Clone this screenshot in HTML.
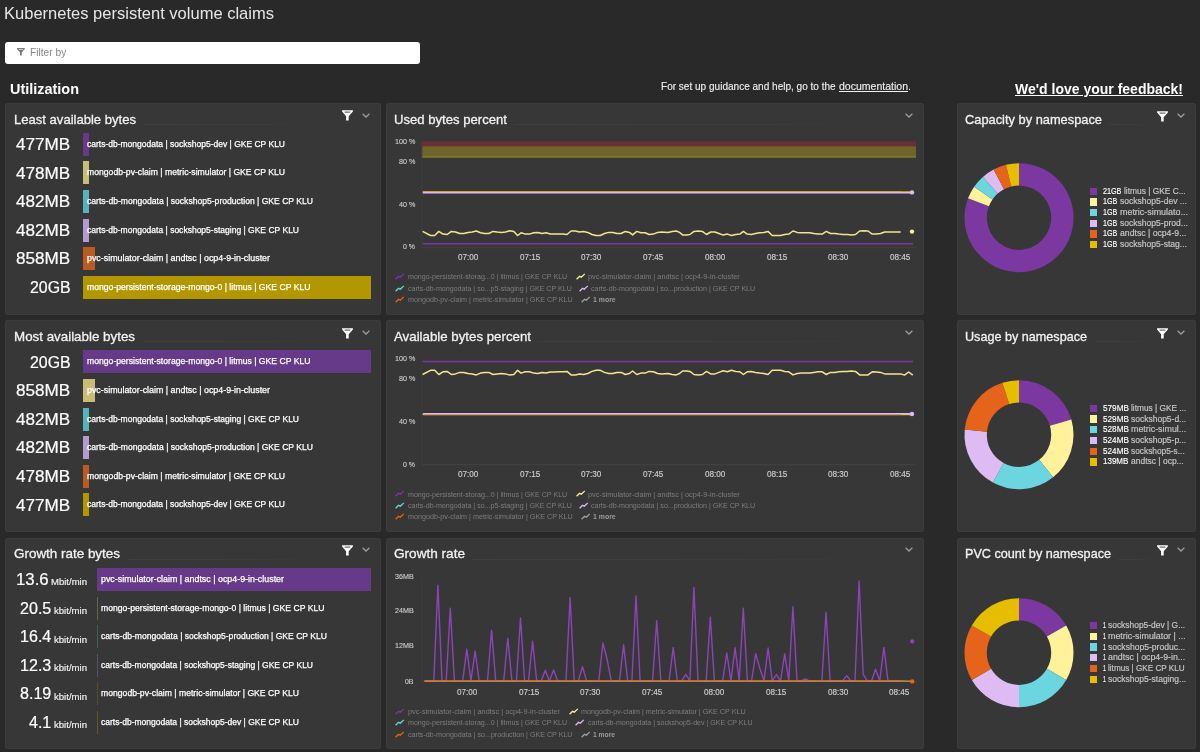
<!DOCTYPE html>
<html lang="en"><head><meta charset="utf-8"><title>Kubernetes persistent volume claims</title>
<style>
html,body{margin:0;padding:0;}
body{width:1200px;height:752px;overflow:hidden;background:#292929;font-family:"Liberation Sans",sans-serif;position:relative;}
#d{position:absolute;left:0;top:0;width:1200px;height:752px;overflow:hidden;filter:blur(0.45px);}
#d div,#d svg,#d span{position:absolute;}
#d span{white-space:pre;line-height:1;transform-origin:0 0;display:block;}
#d svg{overflow:visible;}
</style></head><body><div id="d">
<div style="left:5.3px;top:41.6px;width:415.2px;height:22.7px;background:#fff;border-radius:3px;"></div>
<svg style="left:16.5px;top:48.2px" width="7.8" height="7.6" viewBox="0 0 7.8 7.6" ><path d="M0,0.1 H7.8 V1.0 L4.8,4.3 V7.5 H3.0 V4.3 L0,1.0 Z" fill="#787878"/><path d="M1.9,1.4 H5.9" stroke="#fff" stroke-width="0.7"/></svg>
<div style="left:5px;top:103px;width:375.8px;height:211.6px;background:#373737;border-radius:3px;box-shadow:inset 0 0 0 1px #3b3c3b;"></div>
<div style="left:5px;top:320.2px;width:375.8px;height:211.6px;background:#373737;border-radius:3px;box-shadow:inset 0 0 0 1px #3b3c3b;"></div>
<div style="left:5px;top:537.5px;width:375.8px;height:211.6px;background:#373737;border-radius:3px;box-shadow:inset 0 0 0 1px #3b3c3b;"></div>
<div style="left:385.8px;top:103px;width:538.2px;height:211.6px;background:#373737;border-radius:3px;box-shadow:inset 0 0 0 1px #3b3c3b;"></div>
<div style="left:385.8px;top:320.2px;width:538.2px;height:211.6px;background:#373737;border-radius:3px;box-shadow:inset 0 0 0 1px #3b3c3b;"></div>
<div style="left:385.8px;top:537.5px;width:538.2px;height:211.6px;background:#373737;border-radius:3px;box-shadow:inset 0 0 0 1px #3b3c3b;"></div>
<div style="left:956.9px;top:103px;width:238.8px;height:211.6px;background:#373737;border-radius:3px;box-shadow:inset 0 0 0 1px #3b3c3b;"></div>
<div style="left:956.9px;top:320.2px;width:238.8px;height:211.6px;background:#373737;border-radius:3px;box-shadow:inset 0 0 0 1px #3b3c3b;"></div>
<div style="left:956.9px;top:537.5px;width:238.8px;height:211.6px;background:#373737;border-radius:3px;box-shadow:inset 0 0 0 1px #3b3c3b;"></div>
<div style="left:143px;top:124px;width:177px;height:1px;background:linear-gradient(90deg,#3e3e3e 0%,#3d3d3d 60%,#373737 100%);"></div>
<svg style="left:341.6px;top:110.4px" width="11" height="10.5" viewBox="0 0 11 10.5" ><path d="M0.1,0.3 H10.9 V1.6 L6.7,6.2 V10.4 H4.1 V6.2 L0.1,1.6 Z" fill="#fff"/><path d="M2.6,2.1 H8.4" stroke="#373737" stroke-width="0.9" fill="none"/></svg>
<svg style="left:361.6px;top:112.8px" width="8" height="5" viewBox="0 0 8 5" ><path d="M0.6,0.7 L4,4 L7.4,0.7" stroke="#9c9c9c" stroke-width="1.3" fill="none"/></svg>
<div style="left:82.8px;top:132.8px;width:6.7px;height:23px;background:#673a89;"></div>
<div style="left:82.8px;top:161.4px;width:6.7px;height:23px;background:#c8bc76;"></div>
<div style="left:82.8px;top:190px;width:6.7px;height:23px;background:#55b3b9;"></div>
<div style="left:82.8px;top:218.6px;width:6.7px;height:23px;background:#b39bcf;"></div>
<div style="left:82.8px;top:247.2px;width:12.2px;height:23px;background:#b95b23;"></div>
<div style="left:82.8px;top:275.8px;width:288.2px;height:23px;background:#b39700;"></div>
<div style="left:142px;top:341.2px;width:178px;height:1px;background:linear-gradient(90deg,#3e3e3e 0%,#3d3d3d 60%,#373737 100%);"></div>
<svg style="left:341.6px;top:327.6px" width="11" height="10.5" viewBox="0 0 11 10.5" ><path d="M0.1,0.3 H10.9 V1.6 L6.7,6.2 V10.4 H4.1 V6.2 L0.1,1.6 Z" fill="#fff"/><path d="M2.6,2.1 H8.4" stroke="#373737" stroke-width="0.9" fill="none"/></svg>
<svg style="left:361.6px;top:330px" width="8" height="5" viewBox="0 0 8 5" ><path d="M0.6,0.7 L4,4 L7.4,0.7" stroke="#9c9c9c" stroke-width="1.3" fill="none"/></svg>
<div style="left:82.8px;top:350.4px;width:288.2px;height:23px;background:#673a89;"></div>
<div style="left:82.8px;top:379px;width:12.2px;height:23px;background:#c8bc76;"></div>
<div style="left:82.8px;top:407.6px;width:6.7px;height:23px;background:#55b3b9;"></div>
<div style="left:82.8px;top:436.2px;width:6.7px;height:23px;background:#b39bcf;"></div>
<div style="left:82.8px;top:464.8px;width:6.7px;height:23px;background:#b95b23;"></div>
<div style="left:82.8px;top:493.4px;width:6.7px;height:23px;background:#b39700;"></div>
<div style="left:127px;top:558.5px;width:193px;height:1px;background:linear-gradient(90deg,#3e3e3e 0%,#3d3d3d 60%,#373737 100%);"></div>
<svg style="left:341.6px;top:544.9px" width="11" height="10.5" viewBox="0 0 11 10.5" ><path d="M0.1,0.3 H10.9 V1.6 L6.7,6.2 V10.4 H4.1 V6.2 L0.1,1.6 Z" fill="#fff"/><path d="M2.6,2.1 H8.4" stroke="#373737" stroke-width="0.9" fill="none"/></svg>
<svg style="left:361.6px;top:547.3px" width="8" height="5" viewBox="0 0 8 5" ><path d="M0.6,0.7 L4,4 L7.4,0.7" stroke="#9c9c9c" stroke-width="1.3" fill="none"/></svg>
<div style="left:97px;top:567.9px;width:274px;height:23px;background:#673a89;"></div>
<div style="left:97px;top:596.5px;width:1px;height:23px;background:#6b6440;"></div>
<div style="left:97px;top:625.1px;width:1px;height:23px;background:#3f5f61;"></div>
<div style="left:97px;top:653.7px;width:1px;height:23px;background:#5b5166;"></div>
<div style="left:97px;top:682.3px;width:1px;height:23px;background:#664330;"></div>
<div style="left:97px;top:710.9px;width:1px;height:23px;background:#615624;"></div>
<div style="left:514px;top:124px;width:371px;height:1px;background:linear-gradient(90deg,#3e3e3e 0%,#3d3d3d 60%,#373737 100%);"></div>
<svg style="left:905px;top:112.9px" width="8" height="5" viewBox="0 0 8 5" ><path d="M0.6,0.7 L4,4 L7.4,0.7" stroke="#9c9c9c" stroke-width="1.3" fill="none"/></svg>
<svg style="left:0px;top:103px" width="1200" height="212" viewBox="0 0 1200 212" ><rect x="421.8" y="38.4" width="494.2" height="5.3" fill="#692f37"/><rect x="421.8" y="43.7" width="494.2" height="10.6" fill="#6f652c"/><rect x="421.8" y="53.4" width="494.2" height="1.2" fill="#8c7f28"/><rect x="421.8" y="43.3" width="494.2" height="0.8" fill="#84502f"/><rect x="421.8" y="144.2" width="494.2" height="1" fill="#444"/><rect x="421.3" y="38.4" width="1" height="105.8" fill="#3e3e3e"/><path d="M422.8,140.8 L913.0,140.8" stroke="#7c38a1" stroke-width="1.4" fill="none" stroke-linejoin="round" /><path d="M422.8,88.9 L912.0,88.9" stroke="#e6be00" stroke-width="1.3" fill="none" stroke-linejoin="round" /><path d="M422.8,88.9 L901.0,88.9" stroke="#d9a04a" stroke-width="1.3" fill="none" stroke-linejoin="round" /><path d="M422.8,89.7 L912.0,89.7" stroke="#debbf3" stroke-width="1.4" fill="none" stroke-linejoin="round" /><circle cx="912" cy="89.4" r="2.2" fill="#debbf3"/><path d="M422.6,128.4 L430.5,132.5 L434.7,132.5 L438.8,128.4 L443.0,131.1 L447.2,131.5 L451.3,128.4 L455.5,129.0 L459.7,130.5 L463.8,130.5 L468.0,129.4 L472.2,129.0 L476.3,128.0 L480.5,129.8 L484.7,130.5 L488.8,130.5 L493.0,128.4 L497.2,129.0 L501.3,129.4 L505.5,129.0 L509.7,127.8 L513.8,128.4 L517.6,132.5 L521.1,129.8 L525.3,131.1 L529.5,131.1 L533.6,129.8 L537.8,129.4 L542.0,130.5 L546.1,129.8 L550.3,130.9 L554.5,130.9 L558.6,131.1 L562.8,131.1 L567.0,131.5 L571.1,128.0 L575.3,128.0 L579.5,129.0 L583.6,128.4 L587.8,129.4 L592.0,131.5 L596.1,132.5 L600.3,132.5 L604.5,130.5 L608.6,129.4 L612.8,129.4 L617.0,130.5 L621.1,130.5 L625.3,128.4 L629.5,129.4 L632.6,131.9 L636.8,128.4 L640.9,129.8 L645.1,129.8 L649.2,131.5 L653.4,131.1 L657.6,129.4 L661.8,129.0 L668.0,129.4 L672.2,128.4 L676.3,128.0 L679.5,129.4 L682.6,131.9 L686.8,131.9 L689.9,131.5 L694.0,128.4 L698.2,128.0 L702.4,128.4 L706.5,131.5 L710.7,129.0 L714.9,129.0 L719.0,130.5 L723.2,132.1 L727.4,131.1 L731.5,132.5 L735.7,131.5 L739.9,131.1 L743.4,128.4 L747.2,131.1 L751.3,131.5 L755.5,130.5 L759.7,129.8 L763.8,129.4 L768.0,128.4 L772.2,132.5 L776.3,132.5 L780.5,132.5 L784.7,131.5 L788.8,131.1 L793.0,128.0 L797.2,129.4 L801.3,129.8 L805.5,129.8 L809.7,129.8 L813.8,130.5 L818.0,131.1 L822.2,131.1 L826.3,128.4 L830.5,130.5 L834.7,130.5 L838.8,131.1 L843.0,131.5 L847.2,131.5 L851.3,131.9 L855.5,131.5 L859.7,128.0 L863.8,127.8 L868.0,128.0 L872.2,131.1 L876.3,130.9 L880.5,130.5 L884.7,129.0 L888.8,129.0 L893.0,129.0 L897.2,129.0 L900.7,129.0" stroke="#f3e68e" stroke-width="1.5" fill="none" stroke-linejoin="round" /><circle cx="912" cy="128.6" r="2.2" fill="#fff29a"/></svg>
<svg style="left:394.5px;top:273.2px" width="9.5" height="7" viewBox="0 0 9.5 7" ><path d="M0.6,6.2 L3.6,3.2 L5.2,4.3 L8.8,0.9" stroke="#7c38a1" stroke-width="1.3" fill="none" stroke-linejoin="round"/></svg>
<svg style="left:575.5px;top:273.2px" width="9.5" height="7" viewBox="0 0 9.5 7" ><path d="M0.6,6.2 L3.6,3.2 L5.2,4.3 L8.8,0.9" stroke="#fff29a" stroke-width="1.3" fill="none" stroke-linejoin="round"/></svg>
<svg style="left:394.5px;top:284.6px" width="9.5" height="7" viewBox="0 0 9.5 7" ><path d="M0.6,6.2 L3.6,3.2 L5.2,4.3 L8.8,0.9" stroke="#6bd5e0" stroke-width="1.3" fill="none" stroke-linejoin="round"/></svg>
<svg style="left:579.3px;top:284.6px" width="9.5" height="7" viewBox="0 0 9.5 7" ><path d="M0.6,6.2 L3.6,3.2 L5.2,4.3 L8.8,0.9" stroke="#debbf3" stroke-width="1.3" fill="none" stroke-linejoin="round"/></svg>
<svg style="left:394.5px;top:296px" width="9.5" height="7" viewBox="0 0 9.5 7" ><path d="M0.6,6.2 L3.6,3.2 L5.2,4.3 L8.8,0.9" stroke="#e6631c" stroke-width="1.3" fill="none" stroke-linejoin="round"/></svg>
<svg style="left:580.7px;top:296px" width="9.5" height="7" viewBox="0 0 9.5 7" ><path d="M0.6,6.2 L3.6,3.2 L5.2,4.3 L8.8,0.9" stroke="#a0a0a0" stroke-width="1.3" fill="none" stroke-linejoin="round"/></svg>
<div style="left:538px;top:341.2px;width:347px;height:1px;background:linear-gradient(90deg,#3e3e3e 0%,#3d3d3d 60%,#373737 100%);"></div>
<svg style="left:905px;top:330.1px" width="8" height="5" viewBox="0 0 8 5" ><path d="M0.6,0.7 L4,4 L7.4,0.7" stroke="#9c9c9c" stroke-width="1.3" fill="none"/></svg>
<svg style="left:0px;top:320.2px" width="1200" height="212" viewBox="0 0 1200 212" ><rect x="421.8" y="144.2" width="494.2" height="1" fill="#444"/><rect x="421.3" y="38.4" width="1" height="105.8" fill="#3e3e3e"/><path d="M422.8,41.4 L913.0,41.4" stroke="#7c38a1" stroke-width="1.5" fill="none" stroke-linejoin="round" /><path d="M422.6,54.5 L430.5,50.3 L434.7,50.3 L438.8,54.5 L443.0,51.8 L447.2,51.4 L451.3,54.5 L455.5,53.9 L459.7,52.4 L463.8,52.4 L468.0,53.5 L472.2,53.9 L476.3,54.9 L480.5,53.1 L484.7,52.4 L488.8,52.4 L493.0,54.5 L497.2,53.9 L501.3,53.5 L505.5,53.9 L509.7,55.1 L513.8,54.5 L517.6,50.3 L521.1,53.1 L525.3,51.8 L529.5,51.8 L533.6,53.1 L537.8,53.5 L542.0,52.4 L546.1,53.1 L550.3,52.0 L554.5,52.0 L558.6,51.8 L562.8,51.8 L567.0,51.4 L571.1,54.9 L575.3,54.9 L579.5,53.9 L583.6,54.5 L587.8,53.5 L592.0,51.4 L596.1,50.3 L600.3,50.3 L604.5,52.4 L608.6,53.5 L612.8,53.5 L617.0,52.4 L621.1,52.4 L625.3,54.5 L629.5,53.5 L632.6,51.0 L636.8,54.5 L640.9,53.1 L645.1,53.1 L649.2,51.4 L653.4,51.8 L657.6,53.5 L661.8,53.9 L668.0,53.5 L672.2,54.5 L676.3,54.9 L679.5,53.5 L682.6,51.0 L686.8,51.0 L689.9,51.4 L694.0,54.5 L698.2,54.9 L702.4,54.5 L706.5,51.4 L710.7,53.9 L714.9,53.9 L719.0,52.4 L723.2,50.8 L727.4,51.8 L731.5,50.3 L735.7,51.4 L739.9,51.8 L743.4,54.5 L747.2,51.8 L751.3,51.4 L755.5,52.4 L759.7,53.1 L763.8,53.5 L768.0,54.5 L772.2,50.3 L776.3,50.3 L780.5,50.3 L784.7,51.4 L788.8,51.8 L793.0,54.9 L797.2,53.5 L801.3,53.1 L805.5,53.1 L809.7,53.1 L813.8,52.4 L818.0,51.8 L822.2,51.8 L826.3,54.5 L830.5,52.4 L834.7,52.4 L838.8,51.8 L843.0,51.4 L847.2,51.4 L851.3,51.0 L855.5,51.4 L859.7,54.9 L863.8,55.1 L868.0,54.9 L872.2,51.8 L876.3,52.0 L880.5,52.4 L884.7,53.9 L888.8,53.9 L893.0,53.9 L897.2,53.9 L900.7,53.9 L904.5,55.1 L908.6,52.0 L912.8,55.1" stroke="#f3e68e" stroke-width="1.5" fill="none" stroke-linejoin="round" /><path d="M422.8,94.5 L912.0,94.5" stroke="#e6be00" stroke-width="1.4" fill="none" stroke-linejoin="round" /><path d="M422.8,94.5 L901.0,94.5" stroke="#e6631c" stroke-width="1.2" fill="none" stroke-linejoin="round" /><path d="M422.8,93.7 L912.0,93.7" stroke="#debbf3" stroke-width="1.4" fill="none" stroke-linejoin="round" /><circle cx="912" cy="94" r="2.2" fill="#debbf3"/></svg>
<svg style="left:394.5px;top:490.4px" width="9.5" height="7" viewBox="0 0 9.5 7" ><path d="M0.6,6.2 L3.6,3.2 L5.2,4.3 L8.8,0.9" stroke="#7c38a1" stroke-width="1.3" fill="none" stroke-linejoin="round"/></svg>
<svg style="left:575.5px;top:490.4px" width="9.5" height="7" viewBox="0 0 9.5 7" ><path d="M0.6,6.2 L3.6,3.2 L5.2,4.3 L8.8,0.9" stroke="#fff29a" stroke-width="1.3" fill="none" stroke-linejoin="round"/></svg>
<svg style="left:394.5px;top:501.8px" width="9.5" height="7" viewBox="0 0 9.5 7" ><path d="M0.6,6.2 L3.6,3.2 L5.2,4.3 L8.8,0.9" stroke="#6bd5e0" stroke-width="1.3" fill="none" stroke-linejoin="round"/></svg>
<svg style="left:579.3px;top:501.8px" width="9.5" height="7" viewBox="0 0 9.5 7" ><path d="M0.6,6.2 L3.6,3.2 L5.2,4.3 L8.8,0.9" stroke="#debbf3" stroke-width="1.3" fill="none" stroke-linejoin="round"/></svg>
<svg style="left:394.5px;top:513.2px" width="9.5" height="7" viewBox="0 0 9.5 7" ><path d="M0.6,6.2 L3.6,3.2 L5.2,4.3 L8.8,0.9" stroke="#e6631c" stroke-width="1.3" fill="none" stroke-linejoin="round"/></svg>
<svg style="left:580.7px;top:513.2px" width="9.5" height="7" viewBox="0 0 9.5 7" ><path d="M0.6,6.2 L3.6,3.2 L5.2,4.3 L8.8,0.9" stroke="#a0a0a0" stroke-width="1.3" fill="none" stroke-linejoin="round"/></svg>
<div style="left:472px;top:558.5px;width:413px;height:1px;background:linear-gradient(90deg,#3e3e3e 0%,#3d3d3d 60%,#373737 100%);"></div>
<svg style="left:905px;top:547.4px" width="8" height="5" viewBox="0 0 8 5" ><path d="M0.6,0.7 L4,4 L7.4,0.7" stroke="#9c9c9c" stroke-width="1.3" fill="none"/></svg>
<svg style="left:0px;top:537.5px" width="1200" height="212" viewBox="0 0 1200 212" ><rect x="421.8" y="142.9" width="494.2" height="1" fill="#444"/><rect x="421.3" y="38.4" width="1" height="104.5" fill="#3e3e3e"/><path d="M424.5,142.9 L433.8,142.9 L437.9,47.1 L442.0,142.9 L446.2,142.9 L450.3,70.1 L454.4,142.9 L462.7,142.9 L466.8,111.2 L470.9,142.9 L475.1,113.0 L479.2,142.9 L487.5,142.9 L491.6,92.3 L495.7,142.9 L503.7,142.9 L507.8,100.3 L511.9,142.9 L516.4,142.9 L520.5,79.9 L524.6,142.9 L528.5,142.9 L532.6,103.2 L536.7,142.9 L541.2,142.9 L545.3,132.2 L549.4,142.9 L553.6,131.9 L557.7,142.9 L566.0,142.9 L570.1,59.5 L574.2,142.9 L578.4,142.9 L582.5,128.6 L586.6,142.9 L598.8,142.9 L602.9,105.0 L607.1,121.2 L611.2,142.9 L619.5,142.9 L623.6,106.8 L627.7,142.9 L631.9,142.9 L636.0,58.0 L640.1,142.9 L652.6,142.9 L656.7,82.8 L660.8,142.9 L669.1,142.9 L673.2,109.4 L677.3,142.9 L681.7,142.9 L685.8,136.3 L689.9,142.9 L693.9,49.5 L698.0,142.9 L706.2,142.9 L710.3,79.3 L714.4,142.9 L722.7,142.9 L726.8,115.0 L730.9,142.9 L735.1,109.7 L739.2,142.9 L743.3,70.1 L747.4,142.9 L751.6,142.9 L755.7,115.6 L759.9,130.5 L764.0,142.9 L768.1,110.0 L772.2,142.9 L776.4,136.6 L780.5,142.9 L784.7,115.9 L788.8,142.9 L792.9,68.7 L797.0,142.9 L801.2,142.9 L805.3,141.0 L809.4,142.9 L821.9,142.9 L826.0,74.3 L830.1,142.9 L842.6,142.9 L846.7,137.8 L850.8,142.9 L855.0,142.9 L859.1,43.0 L863.2,136.3 L867.3,142.9 L871.5,142.9 L875.6,131.3 L879.7,142.9 L883.9,109.4 L888.0,142.9 L901.0,142.9" stroke="#8d44b8" stroke-width="1.4" fill="none" stroke-linejoin="round" /><path d="M424.5,143.2 L912.0,143.2" stroke="#cfa548" stroke-width="1.2" fill="none" stroke-linejoin="round" /><path d="M424.5,142.8 L905.0,142.8" stroke="#d06a2b" stroke-width="1.0" fill="none" stroke-linejoin="round" /><circle cx="912.2" cy="103.4" r="2.1" fill="#8d44b8"/><circle cx="912.2" cy="143.4" r="2.2" fill="#e6631c"/></svg>
<svg style="left:394.5px;top:707.7px" width="9.5" height="7" viewBox="0 0 9.5 7" ><path d="M0.6,6.2 L3.6,3.2 L5.2,4.3 L8.8,0.9" stroke="#7c38a1" stroke-width="1.3" fill="none" stroke-linejoin="round"/></svg>
<svg style="left:568.5px;top:707.7px" width="9.5" height="7" viewBox="0 0 9.5 7" ><path d="M0.6,6.2 L3.6,3.2 L5.2,4.3 L8.8,0.9" stroke="#fff29a" stroke-width="1.3" fill="none" stroke-linejoin="round"/></svg>
<svg style="left:394.5px;top:719.1px" width="9.5" height="7" viewBox="0 0 9.5 7" ><path d="M0.6,6.2 L3.6,3.2 L5.2,4.3 L8.8,0.9" stroke="#6bd5e0" stroke-width="1.3" fill="none" stroke-linejoin="round"/></svg>
<svg style="left:575.3px;top:719.1px" width="9.5" height="7" viewBox="0 0 9.5 7" ><path d="M0.6,6.2 L3.6,3.2 L5.2,4.3 L8.8,0.9" stroke="#debbf3" stroke-width="1.3" fill="none" stroke-linejoin="round"/></svg>
<svg style="left:394.5px;top:730.5px" width="9.5" height="7" viewBox="0 0 9.5 7" ><path d="M0.6,6.2 L3.6,3.2 L5.2,4.3 L8.8,0.9" stroke="#e6631c" stroke-width="1.3" fill="none" stroke-linejoin="round"/></svg>
<svg style="left:580.5px;top:730.5px" width="9.5" height="7" viewBox="0 0 9.5 7" ><path d="M0.6,6.2 L3.6,3.2 L5.2,4.3 L8.8,0.9" stroke="#a0a0a0" stroke-width="1.3" fill="none" stroke-linejoin="round"/></svg>
<div style="left:1109px;top:124px;width:42px;height:1px;background:linear-gradient(90deg,#3e3e3e 0%,#3d3d3d 60%,#373737 100%);"></div>
<svg style="left:1156.6px;top:110.6px" width="11" height="10.5" viewBox="0 0 11 10.5" ><path d="M0.1,0.3 H10.9 V1.6 L6.7,6.2 V10.4 H4.1 V6.2 L0.1,1.6 Z" fill="#fff"/><path d="M2.6,2.1 H8.4" stroke="#373737" stroke-width="0.9" fill="none"/></svg>
<svg style="left:1176.5px;top:112.8px" width="8" height="5" viewBox="0 0 8 5" ><path d="M0.6,0.7 L4,4 L7.4,0.7" stroke="#9c9c9c" stroke-width="1.3" fill="none"/></svg>
<svg style="left:0px;top:103px" width="1200" height="212" viewBox="0 0 1200 212" ><path d="M1019.00,60.20 A54.5,54.5 0 1 1 968.04,95.37 L988.89,103.28 A32.2,32.2 0 1 0 1019.00,82.50 Z" fill="#7c38a1"/><path d="M968.04,95.37 A54.5,54.5 0 0 1 974.15,83.74 L992.50,96.41 A32.2,32.2 0 0 0 988.89,103.28 Z" fill="#fff29a"/><path d="M974.15,83.74 A54.5,54.5 0 0 1 982.86,73.91 L997.65,90.60 A32.2,32.2 0 0 0 992.50,96.41 Z" fill="#6bd5e0"/><path d="M982.86,73.91 A54.5,54.5 0 0 1 993.67,66.44 L1004.04,86.19 A32.2,32.2 0 0 0 997.65,90.60 Z" fill="#debbf3"/><path d="M993.67,66.44 A54.5,54.5 0 0 1 1005.96,61.78 L1011.29,83.44 A32.2,32.2 0 0 0 1004.04,86.19 Z" fill="#e6631c"/><path d="M1005.96,61.78 A54.5,54.5 0 0 1 1019.00,60.20 L1019.00,82.50 A32.2,32.2 0 0 0 1011.29,83.44 Z" fill="#e6be00"/></svg>
<div style="left:1089.6px;top:187.5px;width:7.4px;height:7.4px;background:#7c38a1;"></div>
<div style="left:1089.6px;top:198.2px;width:7.4px;height:7.4px;background:#fff29a;"></div>
<div style="left:1089.6px;top:208.9px;width:7.4px;height:7.4px;background:#6bd5e0;"></div>
<div style="left:1089.6px;top:219.6px;width:7.4px;height:7.4px;background:#debbf3;"></div>
<div style="left:1089.6px;top:230.3px;width:7.4px;height:7.4px;background:#e6631c;"></div>
<div style="left:1089.6px;top:241px;width:7.4px;height:7.4px;background:#e6be00;"></div>
<div style="left:1094px;top:341.2px;width:57px;height:1px;background:linear-gradient(90deg,#3e3e3e 0%,#3d3d3d 60%,#373737 100%);"></div>
<svg style="left:1156.6px;top:327.8px" width="11" height="10.5" viewBox="0 0 11 10.5" ><path d="M0.1,0.3 H10.9 V1.6 L6.7,6.2 V10.4 H4.1 V6.2 L0.1,1.6 Z" fill="#fff"/><path d="M2.6,2.1 H8.4" stroke="#373737" stroke-width="0.9" fill="none"/></svg>
<svg style="left:1176.5px;top:330px" width="8" height="5" viewBox="0 0 8 5" ><path d="M0.6,0.7 L4,4 L7.4,0.7" stroke="#9c9c9c" stroke-width="1.3" fill="none"/></svg>
<svg style="left:0px;top:320.2px" width="1200" height="212" viewBox="0 0 1200 212" ><path d="M1019.00,60.20 A54.5,54.5 0 0 1 1071.35,99.53 L1049.93,105.74 A32.2,32.2 0 0 0 1019.00,82.50 Z" fill="#7c38a1"/><path d="M1071.35,99.53 A54.5,54.5 0 0 1 1053.08,157.23 L1039.13,139.83 A32.2,32.2 0 0 0 1049.93,105.74 Z" fill="#fff29a"/><path d="M1053.08,157.23 A54.5,54.5 0 0 1 992.89,162.54 L1003.57,142.96 A32.2,32.2 0 0 0 1039.13,139.83 Z" fill="#6bd5e0"/><path d="M992.89,162.54 A54.5,54.5 0 0 1 964.75,109.52 L986.95,111.64 A32.2,32.2 0 0 0 1003.57,142.96 Z" fill="#debbf3"/><path d="M964.75,109.52 A54.5,54.5 0 0 1 1002.41,62.79 L1009.20,84.03 A32.2,32.2 0 0 0 986.95,111.64 Z" fill="#e6631c"/><path d="M1002.41,62.79 A54.5,54.5 0 0 1 1019.00,60.20 L1019.00,82.50 A32.2,32.2 0 0 0 1009.20,84.03 Z" fill="#e6be00"/></svg>
<div style="left:1089.6px;top:404.7px;width:7.4px;height:7.4px;background:#7c38a1;"></div>
<div style="left:1089.6px;top:415.4px;width:7.4px;height:7.4px;background:#fff29a;"></div>
<div style="left:1089.6px;top:426.1px;width:7.4px;height:7.4px;background:#6bd5e0;"></div>
<div style="left:1089.6px;top:436.8px;width:7.4px;height:7.4px;background:#debbf3;"></div>
<div style="left:1089.6px;top:447.5px;width:7.4px;height:7.4px;background:#e6631c;"></div>
<div style="left:1089.6px;top:458.2px;width:7.4px;height:7.4px;background:#e6be00;"></div>
<div style="left:1118px;top:558.5px;width:35px;height:1px;background:linear-gradient(90deg,#3e3e3e 0%,#3d3d3d 60%,#373737 100%);"></div>
<svg style="left:1156.6px;top:545.1px" width="11" height="10.5" viewBox="0 0 11 10.5" ><path d="M0.1,0.3 H10.9 V1.6 L6.7,6.2 V10.4 H4.1 V6.2 L0.1,1.6 Z" fill="#fff"/><path d="M2.6,2.1 H8.4" stroke="#373737" stroke-width="0.9" fill="none"/></svg>
<svg style="left:1176.5px;top:547.3px" width="8" height="5" viewBox="0 0 8 5" ><path d="M0.6,0.7 L4,4 L7.4,0.7" stroke="#9c9c9c" stroke-width="1.3" fill="none"/></svg>
<svg style="left:0px;top:537.5px" width="1200" height="212" viewBox="0 0 1200 212" ><path d="M1019.00,60.20 A54.5,54.5 0 0 1 1066.20,87.45 L1046.89,98.60 A32.2,32.2 0 0 0 1019.00,82.50 Z" fill="#7c38a1"/><path d="M1066.20,87.45 A54.5,54.5 0 0 1 1066.20,141.95 L1046.89,130.80 A32.2,32.2 0 0 0 1046.89,98.60 Z" fill="#fff29a"/><path d="M1066.20,141.95 A54.5,54.5 0 0 1 1019.00,169.20 L1019.00,146.90 A32.2,32.2 0 0 0 1046.89,130.80 Z" fill="#6bd5e0"/><path d="M1019.00,169.20 A54.5,54.5 0 0 1 971.80,141.95 L991.11,130.80 A32.2,32.2 0 0 0 1019.00,146.90 Z" fill="#debbf3"/><path d="M971.80,141.95 A54.5,54.5 0 0 1 971.80,87.45 L991.11,98.60 A32.2,32.2 0 0 0 991.11,130.80 Z" fill="#e6631c"/><path d="M971.80,87.45 A54.5,54.5 0 0 1 1019.00,60.20 L1019.00,82.50 A32.2,32.2 0 0 0 991.11,98.60 Z" fill="#e6be00"/></svg>
<div style="left:1089.6px;top:622px;width:7.4px;height:7.4px;background:#7c38a1;"></div>
<div style="left:1089.6px;top:632.7px;width:7.4px;height:7.4px;background:#fff29a;"></div>
<div style="left:1089.6px;top:643.4px;width:7.4px;height:7.4px;background:#6bd5e0;"></div>
<div style="left:1089.6px;top:654.1px;width:7.4px;height:7.4px;background:#debbf3;"></div>
<div style="left:1089.6px;top:664.8px;width:7.4px;height:7.4px;background:#e6631c;"></div>
<div style="left:1089.6px;top:675.5px;width:7.4px;height:7.4px;background:#e6be00;"></div>
<span style="left:4px;top:4.61px;font-size:17px;color:#e6e6e6;transform:scaleX(0.9719);">Kubernetes persistent volume claims</span>
<span style="left:29.5px;top:47.11px;font-size:10.5px;color:#878787;transform:scaleX(0.9721);">Filter by</span>
<span style="left:10px;top:81.30px;font-size:15px;color:#fff;font-weight:700;transform:scaleX(0.9627);">Utilization</span>
<span style="left:661px;top:80.61px;font-size:10.5px;color:#f0f0f0;-webkit-text-stroke:0.12px #f0f0f0;transform:scaleX(0.9561);">For set up guidance and help, go to the </span>
<span style="left:838.5px;top:80.61px;font-size:10.5px;color:#f0f0f0;text-decoration:underline;-webkit-text-stroke:0.12px #f0f0f0;transform:scaleX(1.0016);">documentation</span>
<span style="left:907.5px;top:80.61px;font-size:10.5px;color:#f0f0f0;transform:scaleX(1.0267);">.</span>
<span style="left:1015px;top:81.30px;font-size:15px;color:#fff;font-weight:700;text-decoration:underline;transform:scaleX(0.9333);">We'd love your feedback!</span>
<span style="left:14px;top:112.57px;font-size:13.5px;color:#f2f2f2;-webkit-text-stroke:0.3px #f2f2f2;transform:scaleX(0.9675);">Least available bytes</span>
<span style="left:16px;top:137.06px;font-size:16px;color:#fff;-webkit-text-stroke:0.2px #fff;transform:scaleX(1.0690);">477MB</span>
<span style="left:87px;top:139.80px;font-size:8.5px;color:#fff;-webkit-text-stroke:0.25px #fff;transform:scaleX(1.0002);">carts-db-mongodata | sockshop5-dev | GKE CP KLU</span>
<span style="left:16px;top:165.66px;font-size:16px;color:#fff;-webkit-text-stroke:0.2px #fff;transform:scaleX(1.0690);">478MB</span>
<span style="left:87px;top:168.40px;font-size:8.5px;color:#fff;-webkit-text-stroke:0.25px #fff;transform:scaleX(1.0149);">mongodb-pv-claim | metric-simulator | GKE CP KLU</span>
<span style="left:16px;top:194.26px;font-size:16px;color:#fff;-webkit-text-stroke:0.2px #fff;transform:scaleX(1.0690);">482MB</span>
<span style="left:87px;top:197.00px;font-size:8.5px;color:#fff;-webkit-text-stroke:0.25px #fff;transform:scaleX(1.0091);">carts-db-mongodata | sockshop5-production | GKE CP KLU</span>
<span style="left:16px;top:222.86px;font-size:16px;color:#fff;-webkit-text-stroke:0.2px #fff;transform:scaleX(1.0690);">482MB</span>
<span style="left:87px;top:225.60px;font-size:8.5px;color:#fff;-webkit-text-stroke:0.25px #fff;transform:scaleX(1.0016);">carts-db-mongodata | sockshop5-staging | GKE CP KLU</span>
<span style="left:16px;top:251.46px;font-size:16px;color:#fff;-webkit-text-stroke:0.2px #fff;transform:scaleX(1.0690);">858MB</span>
<span style="left:87px;top:254.20px;font-size:8.5px;color:#fff;-webkit-text-stroke:0.25px #fff;transform:scaleX(1.0432);">pvc-simulator-claim | andtsc | ocp4-9-in-cluster</span>
<span style="left:29.5px;top:280.06px;font-size:16px;color:#fff;-webkit-text-stroke:0.2px #fff;transform:scaleX(0.9946);">20GB</span>
<span style="left:87px;top:282.80px;font-size:8.5px;color:#fff;-webkit-text-stroke:0.25px #fff;transform:scaleX(1.0152);">mongo-persistent-storage-mongo-0 | litmus | GKE CP KLU</span>
<span style="left:14px;top:329.77px;font-size:13.5px;color:#f2f2f2;-webkit-text-stroke:0.3px #f2f2f2;transform:scaleX(0.9893);">Most available bytes</span>
<span style="left:29.5px;top:354.66px;font-size:16px;color:#fff;-webkit-text-stroke:0.2px #fff;transform:scaleX(0.9946);">20GB</span>
<span style="left:87px;top:357.40px;font-size:8.5px;color:#fff;-webkit-text-stroke:0.25px #fff;transform:scaleX(1.0152);">mongo-persistent-storage-mongo-0 | litmus | GKE CP KLU</span>
<span style="left:16px;top:383.26px;font-size:16px;color:#fff;-webkit-text-stroke:0.2px #fff;transform:scaleX(1.0690);">858MB</span>
<span style="left:87px;top:386.00px;font-size:8.5px;color:#fff;-webkit-text-stroke:0.25px #fff;transform:scaleX(1.0432);">pvc-simulator-claim | andtsc | ocp4-9-in-cluster</span>
<span style="left:16px;top:411.86px;font-size:16px;color:#fff;-webkit-text-stroke:0.2px #fff;transform:scaleX(1.0690);">482MB</span>
<span style="left:87px;top:414.60px;font-size:8.5px;color:#fff;-webkit-text-stroke:0.25px #fff;transform:scaleX(1.0016);">carts-db-mongodata | sockshop5-staging | GKE CP KLU</span>
<span style="left:16px;top:440.46px;font-size:16px;color:#fff;-webkit-text-stroke:0.2px #fff;transform:scaleX(1.0690);">482MB</span>
<span style="left:87px;top:443.20px;font-size:8.5px;color:#fff;-webkit-text-stroke:0.25px #fff;transform:scaleX(1.0091);">carts-db-mongodata | sockshop5-production | GKE CP KLU</span>
<span style="left:16px;top:469.06px;font-size:16px;color:#fff;-webkit-text-stroke:0.2px #fff;transform:scaleX(1.0690);">478MB</span>
<span style="left:87px;top:471.80px;font-size:8.5px;color:#fff;-webkit-text-stroke:0.25px #fff;transform:scaleX(1.0149);">mongodb-pv-claim | metric-simulator | GKE CP KLU</span>
<span style="left:16px;top:497.66px;font-size:16px;color:#fff;-webkit-text-stroke:0.2px #fff;transform:scaleX(1.0690);">477MB</span>
<span style="left:87px;top:500.40px;font-size:8.5px;color:#fff;-webkit-text-stroke:0.25px #fff;transform:scaleX(1.0002);">carts-db-mongodata | sockshop5-dev | GKE CP KLU</span>
<span style="left:14px;top:547.07px;font-size:13.5px;color:#f2f2f2;-webkit-text-stroke:0.3px #f2f2f2;transform:scaleX(0.9949);">Growth rate bytes</span>
<span style="left:16px;top:571.96px;font-size:16px;color:#fff;-webkit-text-stroke:0.2px #fff;transform:scaleX(1.0469);">13.6</span>
<span style="left:51px;top:578.38px;font-size:9px;color:#f4f4f4;-webkit-text-stroke:0.15px #f4f4f4;transform:scaleX(1.0583);">Mbit/min</span>
<span style="left:101px;top:574.90px;font-size:8.5px;color:#fff;-webkit-text-stroke:0.25px #fff;transform:scaleX(1.0432);">pvc-simulator-claim | andtsc | ocp4-9-in-cluster</span>
<span style="left:19.7px;top:600.56px;font-size:16px;color:#fff;-webkit-text-stroke:0.2px #fff;transform:scaleX(1.0051);">20.5</span>
<span style="left:54px;top:606.98px;font-size:9px;color:#f4f4f4;-webkit-text-stroke:0.15px #f4f4f4;transform:scaleX(1.0640);">kbit/min</span>
<span style="left:101px;top:603.50px;font-size:8.5px;color:#fff;-webkit-text-stroke:0.25px #fff;transform:scaleX(1.0152);">mongo-persistent-storage-mongo-0 | litmus | GKE CP KLU</span>
<span style="left:19.7px;top:629.16px;font-size:16px;color:#fff;-webkit-text-stroke:0.2px #fff;transform:scaleX(1.0051);">16.4</span>
<span style="left:54px;top:635.58px;font-size:9px;color:#f4f4f4;-webkit-text-stroke:0.15px #f4f4f4;transform:scaleX(1.0640);">kbit/min</span>
<span style="left:101px;top:632.10px;font-size:8.5px;color:#fff;-webkit-text-stroke:0.25px #fff;transform:scaleX(1.0091);">carts-db-mongodata | sockshop5-production | GKE CP KLU</span>
<span style="left:19.7px;top:657.76px;font-size:16px;color:#fff;-webkit-text-stroke:0.2px #fff;transform:scaleX(1.0051);">12.3</span>
<span style="left:54px;top:664.18px;font-size:9px;color:#f4f4f4;-webkit-text-stroke:0.15px #f4f4f4;transform:scaleX(1.0640);">kbit/min</span>
<span style="left:101px;top:660.70px;font-size:8.5px;color:#fff;-webkit-text-stroke:0.25px #fff;transform:scaleX(1.0016);">carts-db-mongodata | sockshop5-staging | GKE CP KLU</span>
<span style="left:19.7px;top:686.36px;font-size:16px;color:#fff;-webkit-text-stroke:0.2px #fff;transform:scaleX(1.0051);">8.19</span>
<span style="left:54px;top:692.78px;font-size:9px;color:#f4f4f4;-webkit-text-stroke:0.15px #f4f4f4;transform:scaleX(1.0640);">kbit/min</span>
<span style="left:101px;top:689.30px;font-size:8.5px;color:#fff;-webkit-text-stroke:0.25px #fff;transform:scaleX(1.0149);">mongodb-pv-claim | metric-simulator | GKE CP KLU</span>
<span style="left:28.7px;top:714.96px;font-size:16px;color:#fff;-webkit-text-stroke:0.2px #fff;transform:scaleX(1.0022);">4.1</span>
<span style="left:54px;top:721.38px;font-size:9px;color:#f4f4f4;-webkit-text-stroke:0.15px #f4f4f4;transform:scaleX(1.0640);">kbit/min</span>
<span style="left:101px;top:717.90px;font-size:8.5px;color:#fff;-webkit-text-stroke:0.25px #fff;transform:scaleX(1.0002);">carts-db-mongodata | sockshop5-dev | GKE CP KLU</span>
<span style="left:394px;top:112.57px;font-size:13.5px;color:#f2f2f2;-webkit-text-stroke:0.3px #f2f2f2;transform:scaleX(0.9715);">Used bytes percent</span>
<span style="left:395px;top:137.63px;font-size:8px;color:#cfcfcf;-webkit-text-stroke:0.12px #cfcfcf;transform:scaleX(0.8948);">100 %</span>
<span style="left:399px;top:158.03px;font-size:8px;color:#cfcfcf;-webkit-text-stroke:0.12px #cfcfcf;transform:scaleX(0.8939);">80 %</span>
<span style="left:399px;top:200.63px;font-size:8px;color:#cfcfcf;-webkit-text-stroke:0.12px #cfcfcf;transform:scaleX(0.8939);">40 %</span>
<span style="left:403.3px;top:243.43px;font-size:8px;color:#cfcfcf;-webkit-text-stroke:0.12px #cfcfcf;transform:scaleX(0.8698);">0 %</span>
<span style="left:457.8px;top:252.80px;font-size:8.5px;color:#cfcfcf;-webkit-text-stroke:0.15px #cfcfcf;transform:scaleX(0.9586);">07:00</span>
<span style="left:519.5px;top:252.80px;font-size:8.5px;color:#cfcfcf;-webkit-text-stroke:0.15px #cfcfcf;transform:scaleX(0.9586);">07:15</span>
<span style="left:581.3px;top:252.80px;font-size:8.5px;color:#cfcfcf;-webkit-text-stroke:0.15px #cfcfcf;transform:scaleX(0.9586);">07:30</span>
<span style="left:643.1px;top:252.80px;font-size:8.5px;color:#cfcfcf;-webkit-text-stroke:0.15px #cfcfcf;transform:scaleX(0.9586);">07:45</span>
<span style="left:704.9px;top:252.80px;font-size:8.5px;color:#cfcfcf;-webkit-text-stroke:0.15px #cfcfcf;transform:scaleX(0.9586);">08:00</span>
<span style="left:766.7px;top:252.80px;font-size:8.5px;color:#cfcfcf;-webkit-text-stroke:0.15px #cfcfcf;transform:scaleX(0.9586);">08:15</span>
<span style="left:828.4px;top:252.80px;font-size:8.5px;color:#cfcfcf;-webkit-text-stroke:0.15px #cfcfcf;transform:scaleX(0.9586);">08:30</span>
<span style="left:890.2px;top:252.80px;font-size:8.5px;color:#cfcfcf;-webkit-text-stroke:0.15px #cfcfcf;transform:scaleX(0.9586);">08:45</span>
<span style="left:407.5px;top:273.43px;font-size:8px;color:#7e7e7e;transform:scaleX(0.8862);">mongo-persistent-storag...0 | litmus | GKE CP KLU</span>
<span style="left:587.6px;top:273.43px;font-size:8px;color:#7e7e7e;transform:scaleX(0.9189);">pvc-simulator-claim | andtsc | ocp4-9-in-cluster</span>
<span style="left:407.5px;top:284.83px;font-size:8px;color:#7e7e7e;transform:scaleX(0.8854);">carts-db-mongodata | so...p5-staging | GKE CP KLU</span>
<span style="left:591.4px;top:284.83px;font-size:8px;color:#7e7e7e;transform:scaleX(0.8876);">carts-db-mongodata | so...production | GKE CP KLU</span>
<span style="left:407.5px;top:296.23px;font-size:8px;color:#7e7e7e;transform:scaleX(0.8975);">mongodb-pv-claim | metric-simulator | GKE CP KLU</span>
<span style="left:593px;top:296.23px;font-size:8px;color:#9c9c9c;font-weight:700;transform:scaleX(0.8653);">1 more</span>
<span style="left:394px;top:329.77px;font-size:13.5px;color:#f2f2f2;-webkit-text-stroke:0.3px #f2f2f2;transform:scaleX(0.9832);">Available bytes percent</span>
<span style="left:395px;top:354.83px;font-size:8px;color:#cfcfcf;-webkit-text-stroke:0.12px #cfcfcf;transform:scaleX(0.8948);">100 %</span>
<span style="left:399px;top:375.23px;font-size:8px;color:#cfcfcf;-webkit-text-stroke:0.12px #cfcfcf;transform:scaleX(0.8939);">80 %</span>
<span style="left:399px;top:417.83px;font-size:8px;color:#cfcfcf;-webkit-text-stroke:0.12px #cfcfcf;transform:scaleX(0.8939);">40 %</span>
<span style="left:403.3px;top:460.63px;font-size:8px;color:#cfcfcf;-webkit-text-stroke:0.12px #cfcfcf;transform:scaleX(0.8698);">0 %</span>
<span style="left:457.8px;top:470.00px;font-size:8.5px;color:#cfcfcf;-webkit-text-stroke:0.15px #cfcfcf;transform:scaleX(0.9586);">07:00</span>
<span style="left:519.5px;top:470.00px;font-size:8.5px;color:#cfcfcf;-webkit-text-stroke:0.15px #cfcfcf;transform:scaleX(0.9586);">07:15</span>
<span style="left:581.3px;top:470.00px;font-size:8.5px;color:#cfcfcf;-webkit-text-stroke:0.15px #cfcfcf;transform:scaleX(0.9586);">07:30</span>
<span style="left:643.1px;top:470.00px;font-size:8.5px;color:#cfcfcf;-webkit-text-stroke:0.15px #cfcfcf;transform:scaleX(0.9586);">07:45</span>
<span style="left:704.9px;top:470.00px;font-size:8.5px;color:#cfcfcf;-webkit-text-stroke:0.15px #cfcfcf;transform:scaleX(0.9586);">08:00</span>
<span style="left:766.7px;top:470.00px;font-size:8.5px;color:#cfcfcf;-webkit-text-stroke:0.15px #cfcfcf;transform:scaleX(0.9586);">08:15</span>
<span style="left:828.4px;top:470.00px;font-size:8.5px;color:#cfcfcf;-webkit-text-stroke:0.15px #cfcfcf;transform:scaleX(0.9586);">08:30</span>
<span style="left:890.2px;top:470.00px;font-size:8.5px;color:#cfcfcf;-webkit-text-stroke:0.15px #cfcfcf;transform:scaleX(0.9586);">08:45</span>
<span style="left:407.5px;top:490.63px;font-size:8px;color:#7e7e7e;transform:scaleX(0.8862);">mongo-persistent-storag...0 | litmus | GKE CP KLU</span>
<span style="left:587.6px;top:490.63px;font-size:8px;color:#7e7e7e;transform:scaleX(0.9189);">pvc-simulator-claim | andtsc | ocp4-9-in-cluster</span>
<span style="left:407.5px;top:502.03px;font-size:8px;color:#7e7e7e;transform:scaleX(0.8854);">carts-db-mongodata | so...p5-staging | GKE CP KLU</span>
<span style="left:591.4px;top:502.03px;font-size:8px;color:#7e7e7e;transform:scaleX(0.8876);">carts-db-mongodata | so...production | GKE CP KLU</span>
<span style="left:407.5px;top:513.43px;font-size:8px;color:#7e7e7e;transform:scaleX(0.8975);">mongodb-pv-claim | metric-simulator | GKE CP KLU</span>
<span style="left:593px;top:513.43px;font-size:8px;color:#9c9c9c;font-weight:700;transform:scaleX(0.8653);">1 more</span>
<span style="left:394px;top:547.07px;font-size:13.5px;color:#f2f2f2;-webkit-text-stroke:0.3px #f2f2f2;transform:scaleX(1.0066);">Growth rate</span>
<span style="left:394.8px;top:572.83px;font-size:8px;color:#cfcfcf;-webkit-text-stroke:0.12px #cfcfcf;transform:scaleX(0.8945);">36MB</span>
<span style="left:394.8px;top:606.73px;font-size:8px;color:#cfcfcf;-webkit-text-stroke:0.12px #cfcfcf;transform:scaleX(0.8945);">24MB</span>
<span style="left:394.8px;top:642.43px;font-size:8px;color:#cfcfcf;-webkit-text-stroke:0.12px #cfcfcf;transform:scaleX(0.8945);">12MB</span>
<span style="left:405px;top:678.43px;font-size:8px;color:#cfcfcf;-webkit-text-stroke:0.12px #cfcfcf;transform:scaleX(0.8676);">0B</span>
<span style="left:456.9px;top:687.80px;font-size:8.5px;color:#cfcfcf;-webkit-text-stroke:0.15px #cfcfcf;transform:scaleX(0.9586);">07:00</span>
<span style="left:518.6px;top:687.80px;font-size:8.5px;color:#cfcfcf;-webkit-text-stroke:0.15px #cfcfcf;transform:scaleX(0.9586);">07:15</span>
<span style="left:580.4px;top:687.80px;font-size:8.5px;color:#cfcfcf;-webkit-text-stroke:0.15px #cfcfcf;transform:scaleX(0.9586);">07:30</span>
<span style="left:642.2px;top:687.80px;font-size:8.5px;color:#cfcfcf;-webkit-text-stroke:0.15px #cfcfcf;transform:scaleX(0.9586);">07:45</span>
<span style="left:704px;top:687.80px;font-size:8.5px;color:#cfcfcf;-webkit-text-stroke:0.15px #cfcfcf;transform:scaleX(0.9586);">08:00</span>
<span style="left:765.8px;top:687.80px;font-size:8.5px;color:#cfcfcf;-webkit-text-stroke:0.15px #cfcfcf;transform:scaleX(0.9586);">08:15</span>
<span style="left:827.5px;top:687.80px;font-size:8.5px;color:#cfcfcf;-webkit-text-stroke:0.15px #cfcfcf;transform:scaleX(0.9586);">08:30</span>
<span style="left:889.3px;top:687.80px;font-size:8.5px;color:#cfcfcf;-webkit-text-stroke:0.15px #cfcfcf;transform:scaleX(0.9586);">08:45</span>
<span style="left:407.5px;top:707.93px;font-size:8px;color:#7e7e7e;transform:scaleX(0.9207);">pvc-simulator-claim | andtsc | ocp4-9-in-cluster</span>
<span style="left:580.8px;top:707.93px;font-size:8px;color:#7e7e7e;transform:scaleX(0.8964);">mongodb-pv-claim | metric-simulator | GKE CP KLU</span>
<span style="left:407.5px;top:719.33px;font-size:8px;color:#7e7e7e;transform:scaleX(0.8857);">mongo-persistent-storag...0 | litmus | GKE CP KLU</span>
<span style="left:587.6px;top:719.33px;font-size:8px;color:#7e7e7e;transform:scaleX(0.8834);">carts-db-mongodata | sockshop5-dev | GKE CP KLU</span>
<span style="left:407.5px;top:730.73px;font-size:8px;color:#7e7e7e;transform:scaleX(0.8892);">carts-db-mongodata | so...production | GKE CP KLU</span>
<span style="left:592.6px;top:730.73px;font-size:8px;color:#9c9c9c;font-weight:700;transform:scaleX(0.8424);">1 more</span>
<span style="left:965px;top:112.57px;font-size:13.5px;color:#f2f2f2;-webkit-text-stroke:0.3px #f2f2f2;transform:scaleX(0.9509);">Capacity by namespace</span>
<span style="left:1102.6px;top:186.65px;font-size:8.8px;color:#fff;-webkit-text-stroke:0.15px #fff;transform:scaleX(0.8178);">21GB</span>
<span style="left:1123.8px;top:186.65px;font-size:8.8px;color:#c6c6c6;-webkit-text-stroke:0.18px #c6c6c6;transform:scaleX(0.9513);">litmus | GKE C...</span>
<span style="left:1102.6px;top:197.35px;font-size:8.8px;color:#fff;-webkit-text-stroke:0.15px #fff;transform:scaleX(0.8064);">1GB</span>
<span style="left:1119.6px;top:197.35px;font-size:8.8px;color:#c6c6c6;-webkit-text-stroke:0.18px #c6c6c6;transform:scaleX(0.9702);">sockshop5-dev ...</span>
<span style="left:1102.6px;top:208.05px;font-size:8.8px;color:#fff;-webkit-text-stroke:0.15px #fff;transform:scaleX(0.8064);">1GB</span>
<span style="left:1119.6px;top:208.05px;font-size:8.8px;color:#c6c6c6;-webkit-text-stroke:0.18px #c6c6c6;transform:scaleX(1.0139);">metric-simulato...</span>
<span style="left:1102.6px;top:218.75px;font-size:8.8px;color:#fff;-webkit-text-stroke:0.15px #fff;transform:scaleX(0.8064);">1GB</span>
<span style="left:1119.6px;top:218.75px;font-size:8.8px;color:#c6c6c6;-webkit-text-stroke:0.18px #c6c6c6;transform:scaleX(0.9709);">sockshop5-prod...</span>
<span style="left:1102.6px;top:229.45px;font-size:8.8px;color:#fff;-webkit-text-stroke:0.15px #fff;transform:scaleX(0.8064);">1GB</span>
<span style="left:1119.6px;top:229.45px;font-size:8.8px;color:#c6c6c6;-webkit-text-stroke:0.18px #c6c6c6;transform:scaleX(0.9862);">andtsc | ocp4-9...</span>
<span style="left:1102.6px;top:240.15px;font-size:8.8px;color:#fff;-webkit-text-stroke:0.15px #fff;transform:scaleX(0.8064);">1GB</span>
<span style="left:1119.6px;top:240.15px;font-size:8.8px;color:#c6c6c6;-webkit-text-stroke:0.18px #c6c6c6;transform:scaleX(0.9702);">sockshop5-stag...</span>
<span style="left:965px;top:329.77px;font-size:13.5px;color:#f2f2f2;-webkit-text-stroke:0.3px #f2f2f2;transform:scaleX(0.9343);">Usage by namespace</span>
<span style="left:1102.6px;top:403.85px;font-size:8.8px;color:#fff;-webkit-text-stroke:0.15px #fff;transform:scaleX(0.9291);">579MB</span>
<span style="left:1131.3px;top:403.85px;font-size:8.8px;color:#c6c6c6;-webkit-text-stroke:0.18px #c6c6c6;transform:scaleX(0.9436);">litmus | GKE ...</span>
<span style="left:1102.6px;top:414.55px;font-size:8.8px;color:#fff;-webkit-text-stroke:0.15px #fff;transform:scaleX(0.9291);">529MB</span>
<span style="left:1131.3px;top:414.55px;font-size:8.8px;color:#c6c6c6;-webkit-text-stroke:0.18px #c6c6c6;transform:scaleX(0.9647);">sockshop5-d...</span>
<span style="left:1102.6px;top:425.25px;font-size:8.8px;color:#fff;-webkit-text-stroke:0.15px #fff;transform:scaleX(0.9291);">528MB</span>
<span style="left:1131.3px;top:425.25px;font-size:8.8px;color:#c6c6c6;-webkit-text-stroke:0.18px #c6c6c6;transform:scaleX(1.0082);">metric-simul...</span>
<span style="left:1102.6px;top:435.95px;font-size:8.8px;color:#fff;-webkit-text-stroke:0.15px #fff;transform:scaleX(0.9291);">524MB</span>
<span style="left:1131.3px;top:435.95px;font-size:8.8px;color:#c6c6c6;-webkit-text-stroke:0.18px #c6c6c6;transform:scaleX(0.9647);">sockshop5-p...</span>
<span style="left:1102.6px;top:446.65px;font-size:8.8px;color:#fff;-webkit-text-stroke:0.15px #fff;transform:scaleX(0.9291);">524MB</span>
<span style="left:1131.3px;top:446.65px;font-size:8.8px;color:#c6c6c6;-webkit-text-stroke:0.18px #c6c6c6;transform:scaleX(0.9468);">sockshop5-s...</span>
<span style="left:1102.6px;top:457.35px;font-size:8.8px;color:#fff;-webkit-text-stroke:0.15px #fff;transform:scaleX(0.9112);">139MB</span>
<span style="left:1130.8px;top:457.35px;font-size:8.8px;color:#c6c6c6;-webkit-text-stroke:0.18px #c6c6c6;transform:scaleX(0.9650);">andtsc | ocp...</span>
<span style="left:965px;top:547.07px;font-size:13.5px;color:#f2f2f2;-webkit-text-stroke:0.3px #f2f2f2;transform:scaleX(0.9353);">PVC count by namespace</span>
<span style="left:1102.6px;top:621.15px;font-size:8.8px;color:#fff;-webkit-text-stroke:0.15px #fff;transform:scaleX(0.5911);">1</span>
<span style="left:1108.3px;top:621.15px;font-size:8.8px;color:#c6c6c6;-webkit-text-stroke:0.18px #c6c6c6;transform:scaleX(0.9586);">sockshop5-dev | G...</span>
<span style="left:1102.6px;top:631.85px;font-size:8.8px;color:#fff;-webkit-text-stroke:0.15px #fff;transform:scaleX(0.5911);">1</span>
<span style="left:1108.3px;top:631.85px;font-size:8.8px;color:#c6c6c6;-webkit-text-stroke:0.18px #c6c6c6;transform:scaleX(1.0081);">metric-simulator | ...</span>
<span style="left:1102.6px;top:642.55px;font-size:8.8px;color:#fff;-webkit-text-stroke:0.15px #fff;transform:scaleX(0.5911);">1</span>
<span style="left:1108.3px;top:642.55px;font-size:8.8px;color:#c6c6c6;-webkit-text-stroke:0.18px #c6c6c6;transform:scaleX(0.9745);">sockshop5-produc...</span>
<span style="left:1102.6px;top:653.25px;font-size:8.8px;color:#fff;-webkit-text-stroke:0.15px #fff;transform:scaleX(0.5911);">1</span>
<span style="left:1108.3px;top:653.25px;font-size:8.8px;color:#c6c6c6;-webkit-text-stroke:0.18px #c6c6c6;transform:scaleX(1.0012);">andtsc | ocp4-9-in...</span>
<span style="left:1102.6px;top:663.95px;font-size:8.8px;color:#fff;-webkit-text-stroke:0.15px #fff;transform:scaleX(0.5911);">1</span>
<span style="left:1108.3px;top:663.95px;font-size:8.8px;color:#c6c6c6;-webkit-text-stroke:0.18px #c6c6c6;transform:scaleX(0.9264);">litmus | GKE CP KLU</span>
<span style="left:1102.6px;top:674.65px;font-size:8.8px;color:#fff;-webkit-text-stroke:0.15px #fff;transform:scaleX(0.5911);">1</span>
<span style="left:1108.3px;top:674.65px;font-size:8.8px;color:#c6c6c6;-webkit-text-stroke:0.18px #c6c6c6;transform:scaleX(0.9692);">sockshop5-staging...</span>
</div></body></html>
